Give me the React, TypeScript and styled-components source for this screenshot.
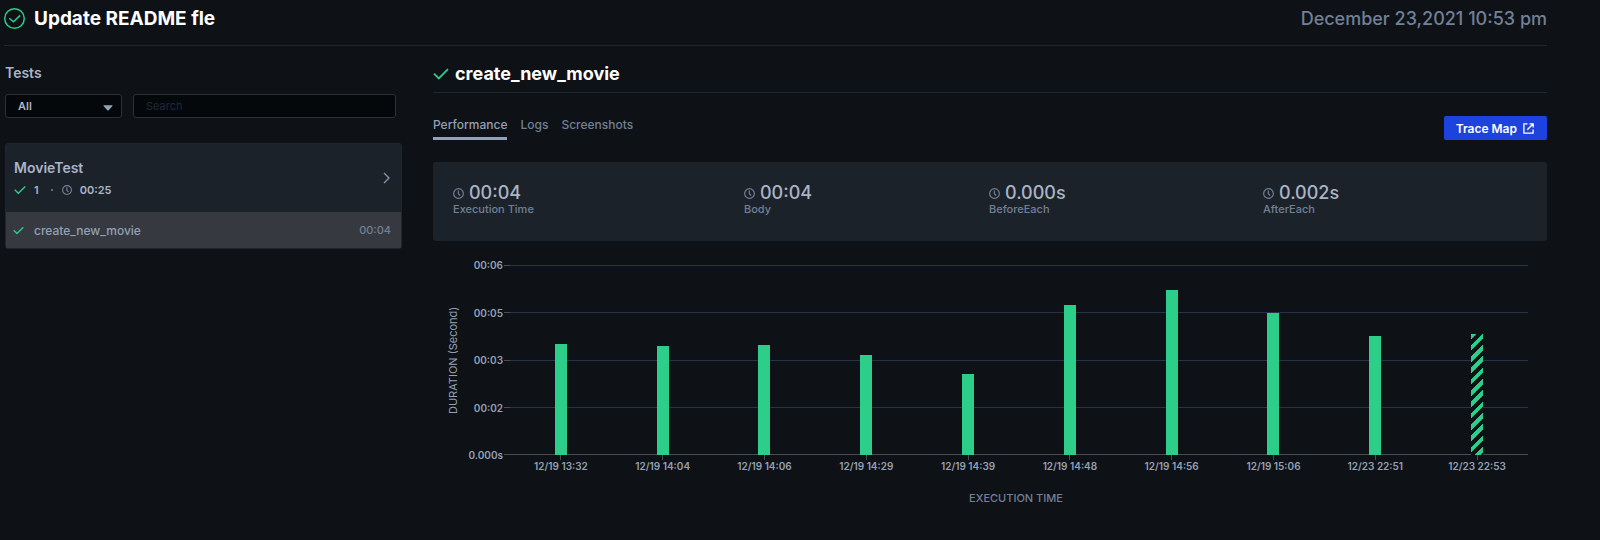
import React from "react";
import styled, { createGlobalStyle } from "styled-components";

const c = {
  bg: "#0e1116",
  panel: "#1c222a",
  line: "#21262d",
  selected: "#363a40",
  text: "#aab4c8",
  soft: "#94a0b5",
  muted: "#718096",
  green: "#2dce89",
  tick: "#4a4d52",
  grid: "#25344a",
  blue: "#1d42de",
};

const GlobalStyle = createGlobalStyle`
  *, *::before, *::after { box-sizing: border-box; }
  body { margin: 0; background: ${c.bg}; color: ${c.text}; font-family: Inter, sans-serif; }
  h1, h2, h3, p, ul, dl, dd { margin: 0; padding: 0; }
  button, input, select { font-family: inherit; }
`;

const Page = styled.div`
  padding: 0 53px 32px 4px;
`;

const Header = styled.header`
  display: flex;
  align-items: center;
  justify-content: space-between;
  height: 46px;
  padding-bottom: 8px;
  border-bottom: 1px solid ${c.line};
`;

const HeaderTitle = styled.div`
  display: flex;
  align-items: center;
  gap: 9px;
`;

const Title = styled.h1`
  font-size: 19px;
  line-height: 24px;
  font-weight: 700;
  color: #fff;
`;

const DateText = styled.time`
  font-size: 18px;
  line-height: 24px;
  font-weight: 500;
  color: ${c.muted};
`;

const Columns = styled.main`
  display: grid;
  grid-template-columns: 397px minmax(0, 1fr);
  gap: 31px;
  padding-left: 1px;
`;

const Sidebar = styled.aside`
  padding-top: 16px;
`;

const SidebarTitle = styled.h2`
  font-size: 14px;
  line-height: 22px;
  font-weight: 600;
`;

const Filters = styled.div`
  display: grid;
  grid-template-columns: 117px 1fr;
  gap: 11px;
  padding: 10px 6px 25px 0;
`;

const SelectWrap = styled.div`
  display: grid;
  align-items: center;
  & > * { grid-area: 1 / 1; }
  & > svg { justify-self: end; margin: 4px 9px 0 0; pointer-events: none; }
`;

const Select = styled.select`
  appearance: none;
  width: 100%;
  height: 24px;
  padding: 0 12px;
  border: 1px solid #2d3138;
  border-radius: 3px;
  background: #05080b;
  color: ${c.text};
  font-size: 11px;
  font-weight: 600;
`;

const Search = styled.input`
  width: 100%;
  height: 24px;
  padding: 0 12px;
  border: 1px solid #2d3138;
  border-radius: 3px;
  background: #05080b;
  color: ${c.text};
  font-size: 11px;
  &::placeholder { color: #1e293b; opacity: 1; }
`;

const Card = styled.section`
  border: 1px solid ${c.line};
  border-radius: 3px;
  background: ${c.panel};
`;

const CardHead = styled.button`
  display: flex;
  align-items: center;
  justify-content: space-between;
  width: 100%;
  height: 68px;
  padding: 0 11px 0 8px;
  border: 0;
  background: none;
  color: ${c.text};
  text-align: left;
`;

const SuiteName = styled.span`
  display: block;
  font-size: 14px;
  line-height: 24px;
  font-weight: 600;
`;

const SuiteStats = styled.span`
  display: flex;
  align-items: center;
  gap: 8px;
  font-size: 11px;
  line-height: 20px;
  font-weight: 600;
`;

const Dot = styled.span`
  width: 2px;
  height: 2px;
  margin: 0 1px 0 4px;
  border-radius: 1px;
  background: ${c.muted};
`;

const TestRow = styled.a`
  display: flex;
  align-items: center;
  gap: 10px;
  height: 36px;
  padding: 0 10px 0 7px;
  background: ${c.selected};
  color: ${c.soft};
  font-size: 12px;
  font-weight: 500;
  text-decoration: none;
`;

const TestTime = styled.span`
  margin-left: auto;
  font-size: 11px;
  color: ${c.muted};
`;

const Detail = styled.section`
  padding-top: 16px;
`;

const DetailTitle = styled.h2`
  display: flex;
  align-items: center;
  gap: 6px;
  padding-bottom: 6px;
  border-bottom: 1px solid #1e2630;
  color: #fff;
  font-size: 18px;
  line-height: 24px;
  font-weight: 700;
`;

const Toolbar = styled.div`
  display: flex;
  align-items: flex-end;
  justify-content: space-between;
  padding: 23px 0 22px;
`;

const Tabs = styled.nav`
  display: flex;
  gap: 13px;
`;

const Tab = styled.button<{ $active?: boolean }>`
  height: 24px;
  padding: 0 0 4px;
  border: 0;
  border-bottom: 3px solid ${(p) => (p.$active ? c.soft : "transparent")};
  background: none;
  color: ${(p) => (p.$active ? c.soft : c.muted)};
  font-size: 12px;
  line-height: 17px;
  font-weight: 500;
`;

const TraceButton = styled.button`
  display: flex;
  align-items: center;
  gap: 6px;
  height: 24px;
  padding: 0 13px 0 12px;
  border: 0;
  border-radius: 2px;
  background: ${c.blue};
  color: #fff;
  font-size: 12px;
  font-weight: 600;
`;

const Metrics = styled.dl`
  display: grid;
  grid-template-columns: 291fr 245fr 274fr 264fr;
  height: 79px;
  padding: 21px 20px 0;
  border-radius: 3px;
  background: ${c.panel};
`;

const Metric = styled.div`
  display: flex;
  flex-direction: column-reverse;
  justify-content: flex-end;
`;

const MetricValue = styled.dd`
  display: flex;
  align-items: center;
  gap: 5px;
  font-size: 18px;
  line-height: 20px;
  font-weight: 500;
`;

const MetricLabel = styled.dt`
  font-size: 11px;
  line-height: 13px;
  font-weight: 500;
  color: ${c.muted};
`;

const Chart = styled.figure`
  display: grid;
  grid-template-columns: 20px 40px 6px minmax(0, 1fr);
  margin: 24px 19px 0 11px;
`;

const YTitle = styled.div`
  writing-mode: vertical-rl;
  transform: rotate(180deg);
  text-align: center;
  font-size: 11px;
  line-height: 18px;
  color: ${c.soft};
`;

const YLabels = styled.div`
  display: flex;
  flex-direction: column;
  justify-content: space-between;
  margin: -7px 1px -7px 0;
  text-align: right;
  font-size: 10px;
  line-height: 14px;
  font-weight: 600;
  color: ${c.soft};
`;

const YTicks = styled.div`
  display: flex;
  flex-direction: column;
  justify-content: space-between;
`;

const YTick = styled.span`
  height: 1px;
  background: ${c.tick};
`;

const Plot = styled.div`
  display: grid;
  height: 190px;
  & > * { grid-area: 1 / 1; }
`;

const Gridlines = styled.div`
  display: flex;
  flex-direction: column;
  justify-content: space-between;
`;

const Gridline = styled.span<{ $axis?: boolean }>`
  height: 1px;
  background: ${(p) => (p.$axis ? c.tick : c.grid)};
`;

const Bars = styled.div`
  display: grid;
  grid-template-columns: repeat(10, 1fr);
  align-items: end;
  justify-items: center;
`;

const Bar = styled.div<{ $current?: boolean }>`
  width: 12px;
  background: ${(p) =>
    p.$current
      ? `repeating-linear-gradient(135deg, ${c.green} 0 4px, ${c.bg} 4px 8px)`
      : c.green};
`;

const XLabels = styled.div`
  grid-column: 4;
  display: grid;
  grid-template-columns: repeat(10, 1fr);
  font-size: 10px;
  line-height: 12px;
  font-weight: 600;
  text-align: center;
  color: ${c.soft};
`;

const XLabel = styled.span`
  display: flex;
  flex-direction: column;
  align-items: center;
  &::before { content: ""; width: 1px; height: 5px; background: ${c.tick}; }
`;

const XTitle = styled.figcaption`
  grid-column: 3 / 5;
  padding-top: 18px;
  text-align: center;
  font-size: 11px;
  line-height: 16px;
  font-weight: 500;
  color: ${c.muted};
`;

const Check = ({ size = 12 }: { size?: number }) => (
  <svg width={size} height={size} viewBox="0 0 16 16" fill="none" stroke={c.green} strokeWidth="1.8" aria-hidden="true">
    <path d="M1 7.6 5.8 12.4 15 3.2" />
  </svg>
);

const Clock = ({ size = 11 }: { size?: number }) => (
  <svg width={size} height={size} viewBox="0 0 12 12" fill="none" stroke={c.muted} strokeWidth="1.3" aria-hidden="true">
    <circle cx="6" cy="6" r="5.3" />
    <path d="M5.8 2.6V6.2L7.8 8.2" />
  </svg>
);

const metrics = [
  { label: "Execution Time", value: "00:04" },
  { label: "Body", value: "00:04" },
  { label: "BeforeEach", value: "0.000s" },
  { label: "AfterEach", value: "0.002s" },
];

const yLabels = ["00:06", "00:05", "00:03", "00:02", "0.000s"];

const runs = [
  { at: "12/19 13:32", share: 58.5 },
  { at: "12/19 14:04", share: 57.4 },
  { at: "12/19 14:06", share: 58 },
  { at: "12/19 14:29", share: 52.4 },
  { at: "12/19 14:39", share: 42.8 },
  { at: "12/19 14:48", share: 78.8 },
  { at: "12/19 14:56", share: 86.8 },
  { at: "12/19 15:06", share: 74.7 },
  { at: "12/23 22:51", share: 62.8 },
  { at: "12/23 22:53", share: 63.6, current: true },
];

export default function App() {
  return (
    <Page>
      <GlobalStyle />
      <Header>
        <HeaderTitle>
          <svg width="21" height="21" viewBox="0 0 20 20" fill="none" stroke={c.green} strokeWidth="1.4" aria-hidden="true">
            <circle cx="10" cy="10" r="9.3" />
            <path d="M5 9.8 9 13.2 15.4 7" />
          </svg>
          <Title>Update README fle</Title>
        </HeaderTitle>
        <DateText dateTime="2021-12-23T22:53">December 23,2021 10:53 pm</DateText>
      </Header>
      <Columns>
        <Sidebar>
          <SidebarTitle>Tests</SidebarTitle>
          <Filters>
            <SelectWrap>
              <Select aria-label="Status" defaultValue="All">
                <option>All</option>
              </Select>
              <svg width="10" height="6" viewBox="0 0 11 6" fill={c.soft} aria-hidden="true">
                <path d="M1 0H10Q11 0 10.4 .8L6.3 5.5Q5.5 6.2 4.7 5.5L.6 .8Q0 0 1 0Z" />
              </svg>
            </SelectWrap>
            <Search type="text" aria-label="Search tests" placeholder="Search" />
          </Filters>
          <Card>
            <CardHead type="button">
              <span>
                <SuiteName>MovieTest</SuiteName>
                <SuiteStats>
                  <Check />
                  <span>1</span>
                  <Dot />
                  <Clock size={10} />
                  <span>00:25</span>
                </SuiteStats>
              </span>
              <svg width="7" height="12" viewBox="0 0 7 12" fill="none" stroke="#8792a6" strokeWidth="1.4" aria-hidden="true">
                <path d="M1 1 6 6 1 11" />
              </svg>
            </CardHead>
            <TestRow href="#create_new_movie">
              <Check size={11} />
              <span>create_new_movie</span>
              <TestTime>00:04</TestTime>
            </TestRow>
          </Card>
        </Sidebar>
        <Detail>
          <DetailTitle>
            <Check size={16} />
            create_new_movie
          </DetailTitle>
          <Toolbar>
            <Tabs>
              <Tab type="button" $active>Performance</Tab>
              <Tab type="button">Logs</Tab>
              <Tab type="button">Screenshots</Tab>
            </Tabs>
            <TraceButton type="button">
              Trace Map
              <svg width="11" height="11" viewBox="0 0 11 11" fill="none" stroke="#fff" strokeWidth="1.3" aria-hidden="true">
                <path d="M4.5 .9H.9V10.1H10.1V6.5M6.5 .8H10.2V4.5M10 1 4.3 6.7" />
              </svg>
            </TraceButton>
          </Toolbar>
          <Metrics>
            {metrics.map((m) => (
              <Metric key={m.label}>
                <MetricLabel>{m.label}</MetricLabel>
                <MetricValue>
                  <Clock />
                  {m.value}
                </MetricValue>
              </Metric>
            ))}
          </Metrics>
          <Chart>
            <YTitle>DURATION (Second)</YTitle>
            <YLabels>
              {yLabels.map((l) => (
                <span key={l}>{l}</span>
              ))}
            </YLabels>
            <YTicks>
              {yLabels.map((l) => (
                <YTick key={l} />
              ))}
            </YTicks>
            <Plot>
              <Gridlines>
                {yLabels.map((l, i) => (
                  <Gridline key={l} $axis={i === yLabels.length - 1} />
                ))}
              </Gridlines>
              <Bars>
                {runs.map((r) => (
                  <Bar key={r.at} $current={r.current} style={{ height: `${r.share}%` }} />
                ))}
              </Bars>
            </Plot>
            <XLabels>
              {runs.map((r) => (
                <XLabel key={r.at}>{r.at}</XLabel>
              ))}
            </XLabels>
            <XTitle>EXECUTION TIME</XTitle>
          </Chart>
        </Detail>
      </Columns>
    </Page>
  );
}
